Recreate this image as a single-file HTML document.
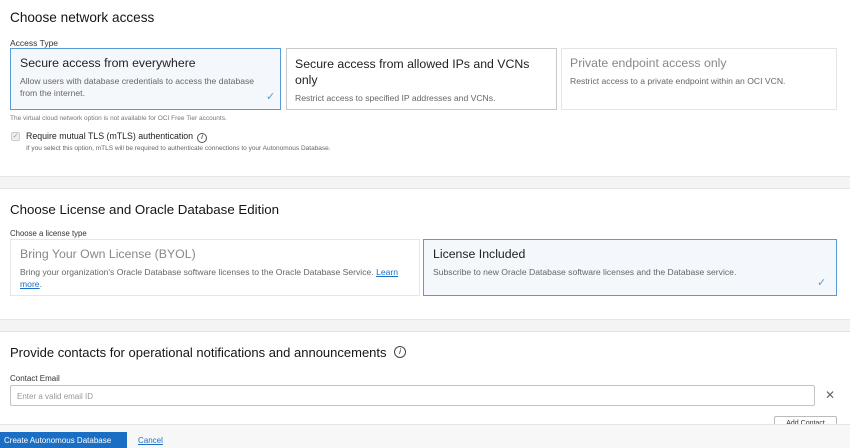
<!DOCTYPE html>
<html><head><style>
*{box-sizing:border-box;margin:0;padding:0}
body{width:850px;height:448px;overflow:hidden;background:#fff;font-family:"Liberation Sans",Arial,sans-serif;color:#161513;position:relative}
.a{position:absolute;white-space:nowrap}
.card{position:absolute;border:1px solid #dcdcdc;background:#fff}
.sel{border:1px solid #5b9bd5;background:#f4f7fb}
.t{position:absolute;font-size:12.3px;color:#222}
.d{position:absolute;font-size:8.6px;color:#666;line-height:12px}
.chk{position:absolute;color:#5b9bd5;font-size:11px}
</style></head><body>
<div class="a" style="left:10px;top:10px;font-size:13.6px">Choose network access</div>
<div class="a" style="left:10px;top:38px;font-size:8.5px;color:#333">Access Type</div>
<div class="card sel" style="left:10px;top:48px;width:271px;height:62px">
 <div class="t" style="left:9px;top:7px">Secure access from everywhere</div>
 <div class="d" style="left:9px;top:26px">Allow users with database credentials to access the database<br>from the internet.</div>
 <div class="chk" style="left:255px;top:41px">✓</div>
</div>
<div class="card" style="left:286px;top:48px;width:271px;height:62px;border-color:#c8c8c8">
 <div class="t" style="left:8px;top:7px;line-height:16px">Secure access from allowed IPs and VCNs<br>only</div>
 <div class="d" style="left:8px;top:43px">Restrict access to specified IP addresses and VCNs.</div>
</div>
<div class="card" style="left:561px;top:48px;width:276px;height:62px;border-color:#e4e4e4">
 <div class="t" style="left:8px;top:7px;color:#888">Private endpoint access only</div>
 <div class="d" style="left:8px;top:26px">Restrict access to a private endpoint within an OCI VCN.</div>
</div>
<div class="a" style="left:10px;top:115px;font-size:6.5px;color:#777">The virtual cloud network option is not available for OCI Free Tier accounts.</div>
<div class="a" style="left:11px;top:132px;width:9px;height:9px;border:1px solid #ccc;background:#eee;border-radius:2px;font-size:7px;color:#999;text-align:center;line-height:8px">✓</div>
<div class="a" style="left:26px;top:131px;font-size:8.8px;color:#222">Require mutual TLS (mTLS) authentication</div>
<div class="a" style="left:197px;top:133px;width:10px;height:10px;border:1px solid #555;border-radius:50%;font-size:7px;text-align:center;line-height:8px;font-style:italic">i</div>
<div class="a" style="left:26px;top:145px;font-size:6.5px;color:#666">If you select this option, mTLS will be required to authenticate connections to your Autonomous Database.</div>

<div class="a" style="left:0;top:176px;width:850px;height:13px;background:#f4f4f4;border-top:1px solid #e6e6e6;border-bottom:1px solid #e2e2e2"></div>

<div class="a" style="left:10px;top:202px;font-size:13.3px">Choose License and Oracle Database Edition</div>
<div class="a" style="left:10px;top:229px;font-size:7.8px;color:#333">Choose a license type</div>
<div class="card" style="left:10px;top:239px;width:410px;height:57px;border-color:#e6e6e6">
 <div class="t" style="left:9px;top:7px;color:#888">Bring Your Own License (BYOL)</div>
 <div class="d" style="left:9px;top:26px;color:#666">Bring your organization's Oracle Database software licenses to the Oracle Database Service. <span style="color:#1a6fc4;text-decoration:underline">Learn</span><br><span style="color:#1a6fc4;text-decoration:underline">more</span>.</div>
</div>
<div class="card sel" style="left:423px;top:239px;width:414px;height:57px">
 <div class="t" style="left:9px;top:7px">License Included</div>
 <div class="d" style="left:9px;top:26px">Subscribe to new Oracle Database software licenses and the Database service.</div>
 <div class="chk" style="left:393px;top:36px">✓</div>
</div>

<div class="a" style="left:0;top:319px;width:850px;height:13px;background:#f4f4f4;border-top:1px solid #e6e6e6;border-bottom:1px solid #e2e2e2"></div>

<div class="a" style="left:10px;top:345px;font-size:13px">Provide contacts for operational notifications and announcements</div>
<div class="a" style="left:394px;top:346px;width:12px;height:12px;border:1px solid #444;border-radius:50%;font-size:8px;text-align:center;line-height:10px;font-style:italic">i</div>
<div class="a" style="left:10px;top:374px;font-size:8px;color:#333">Contact Email</div>
<div class="a" style="left:10px;top:385px;width:805px;height:21px;border:1px solid #c4c4c4;border-radius:2px;font-size:8px;color:#999;padding:6px 0 0 6px">Enter a valid email ID</div>
<div class="a" style="left:825px;top:388px;font-size:12px;color:#666">✕</div>
<div class="a" style="left:774px;top:416px;width:63px;height:14px;border:1px solid #bbb;border-radius:2px;font-size:7px;color:#333;text-align:center;padding-top:3px">Add Contact</div>

<div class="a" style="left:0;top:424px;width:850px;height:24px;background:#f7f7f7;border-top:1px solid #e4e4e4"></div>
<div class="a" style="left:0;top:432px;width:127px;height:16px;background:#1a6fc4;color:#fff;font-size:8px;padding:4px 0 0 4px">Create Autonomous Database</div>
<div class="a" style="left:138px;top:436px;font-size:8px;color:#1a6fc4;text-decoration:underline">Cancel</div>
</body></html>
